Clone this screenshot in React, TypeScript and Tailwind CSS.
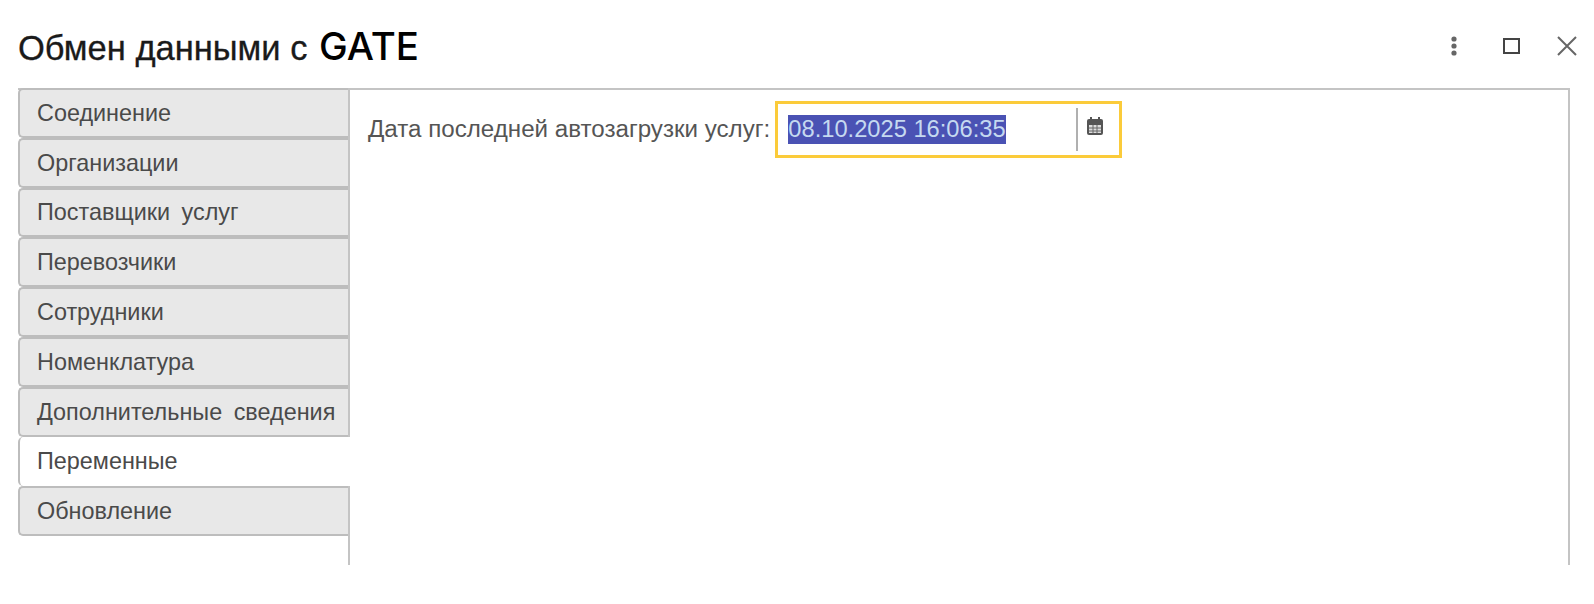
import React from 'react';

const tabs = [
  'Соединение',
  'Организации',
  'Поставщики услуг',
  'Перевозчики',
  'Сотрудники',
  'Номенклатура',
  'Дополнительные сведения',
  'Переменные',
  'Обновление',
];

const activeTab = 'Переменные';

export default function App() {
  return (
    <div className="w-[1594px] h-[604px] bg-white overflow-hidden font-['Liberation_Sans',sans-serif]">
      {/* Header */}
      <div className="h-[88px] pl-[18px] pr-[16px] flex items-center justify-between">
        <h1 className="text-[34.5px] leading-none text-[#1a1a1a] pt-[4px] whitespace-nowrap [-webkit-text-stroke:0.3px_#1a1a1a]">
          Обмен данными с <span className="ml-[2px] font-['Inter',sans-serif] font-medium text-[38.4px] text-black [-webkit-text-stroke:0px]">GATE</span>
        </h1>
        <div className="flex items-center text-[#555] pt-[3px]">
          <svg width="8" height="22" viewBox="0 0 8 22" className="mr-[45px]">
            <circle cx="4" cy="4" r="2.6" fill="#666" />
            <circle cx="4" cy="11" r="2.6" fill="#666" />
            <circle cx="4" cy="18" r="2.6" fill="#666" />
          </svg>
          <div className="w-[17px] h-[16px] border-2 border-[#444] mr-[36px]" />
          <svg width="22" height="22" viewBox="0 0 22 22" fill="none" stroke="#666" strokeWidth="2">
            <path d="M2 2 L20 20 M20 2 L2 20" />
          </svg>
        </div>
      </div>

      {/* Tabs and page */}
      <div className="ml-[18px] w-[1552px] h-[477px] flex border-t-2 border-r-2 border-[#c4c4c4]">
        <div className="w-[330px] shrink-0 -mt-[2px] relative z-10">
          {tabs.map((tab) => (
            <div
              key={tab}
              className={
                tab === activeTab
                  ? 'h-[49.8px] pt-[1px] -mr-[2px] pl-[17px] flex items-center text-[23.4px] [word-spacing:5px] text-[#4a4a4a] bg-white border-l-2 border-[#bdbdbd] rounded-l-[5px] whitespace-nowrap'
                  : 'h-[49.8px] pt-[1px] pl-[17px] flex items-center text-[23.4px] [word-spacing:5px] text-[#4a4a4a] bg-[#e8e8e8] border-2 border-r-0 border-[#bdbdbd] rounded-l-[5px] whitespace-nowrap'
              }
            >
              {tab}
            </div>
          ))}
        </div>

        <div className="flex-1 border-l-2 border-[#c4c4c4] pl-[18px] pt-[11px]">
          <div className="flex items-center">
            <span className="text-[24.15px] text-[#555] whitespace-nowrap mr-[5px]">Дата последней автозагрузки услуг:</span>
            <div className="w-[347px] h-[57px] border-[3px] border-[#fbcb3a] flex items-center pl-[10px]">
              <span className="bg-[#4a52b4] text-[#c5d9f0] text-[23.7px] leading-[29px] whitespace-nowrap">08.10.2025 16:06:35</span>
              <div className="ml-auto flex items-center">
                <div className="w-[2px] h-[43px] bg-[#b0b0b0]" />
                <svg width="18" height="20" viewBox="0 0 18 20" className="ml-[8px] mr-[15px] mb-[8px]">
                  <rect x="1" y="3" width="16" height="16" rx="2" fill="#555" />
                  <rect x="4" y="1" width="2" height="4" fill="#555" />
                  <rect x="12" y="1" width="2" height="4" fill="#555" />
                  <path d="M3 9h12v8H3z" fill="#ddd" />
                  <path d="M7 9v8M11 9v8M3 12h12M3 15h12" stroke="#666" strokeWidth="1" />
                </svg>
              </div>
            </div>
          </div>
        </div>
      </div>
    </div>
  );
}
